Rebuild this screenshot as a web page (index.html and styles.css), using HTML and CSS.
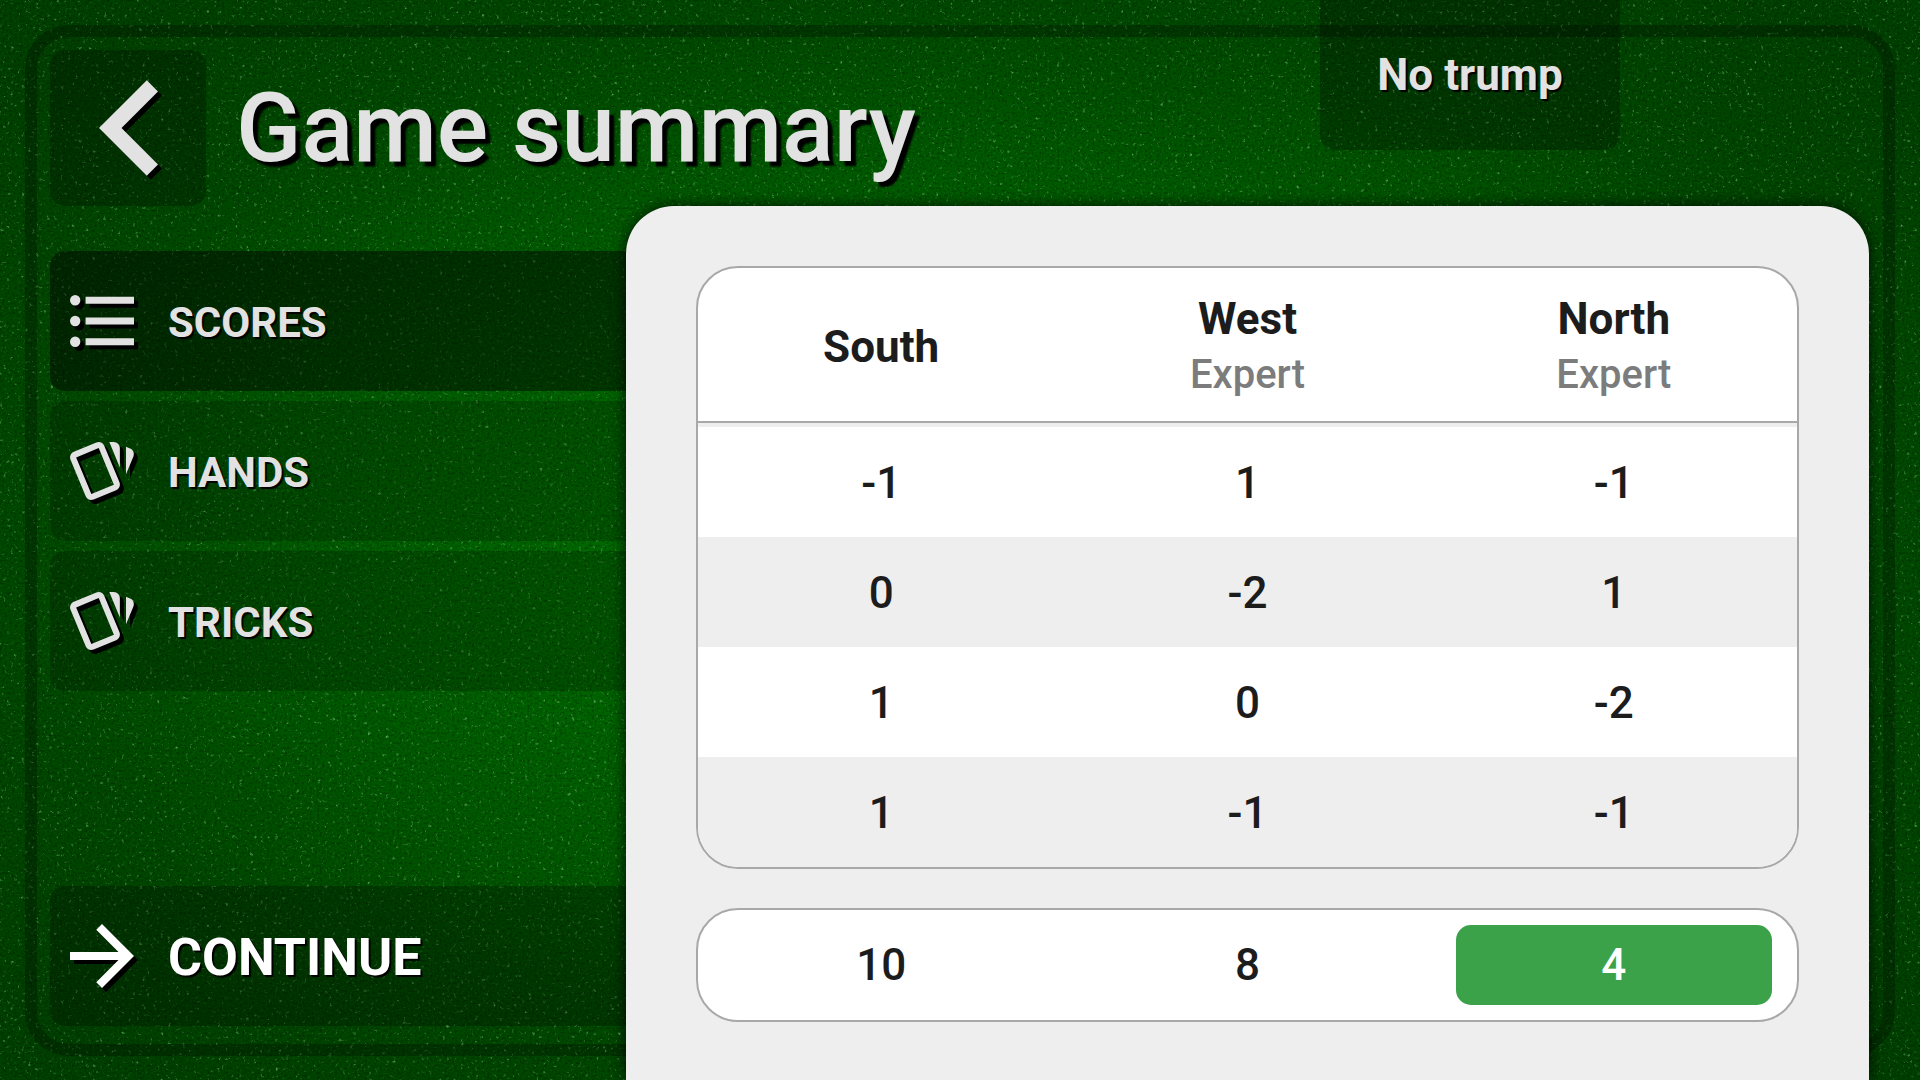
FILE: index.html
```html
<!DOCTYPE html>
<html lang="en">
<head>
<meta charset="utf-8">
<meta name="viewport" content="width=device-width, initial-scale=1">
<title>Game summary</title>
<link rel="stylesheet" href="styles.css">
</head>
<body>
<svg class="felt" aria-hidden="true">
  <filter id="specks" x="0" y="0" width="100%" height="100%" color-interpolation-filters="sRGB">
    <feTurbulence type="fractalNoise" baseFrequency="0.28" numOctaves="3" seed="7"/>
    <feColorMatrix values="0 0 0 0 0.5  0 0 0 0 0.8  0 0 0 0 0.5  2.4 0 0 0 -1.56"/>
  </filter>
  <filter id="grain" x="0" y="0" width="100%" height="100%" color-interpolation-filters="sRGB">
    <feTurbulence type="fractalNoise" baseFrequency="0.4" numOctaves="2" seed="3"/>
    <feColorMatrix values="0 0 0 0 0  0 0 0 0 0  0 0 0 0 0  0 0.8 0 0 -0.36"/>
  </filter>
  <rect width="100%" height="100%" filter="url(#grain)"/>
  <rect width="100%" height="100%" filter="url(#specks)"/>
</svg>
<div class="frame"></div>

<div class="page">
  <header class="header">
    <button class="back" type="button" aria-label="Back">
      <svg class="icon icon-back" viewBox="8 6 7.41 12"><path d="M15.41,16.58L10.83,12L15.41,7.41L14,6L8,12L14,18L15.41,16.58Z"/></svg>
    </button>
    <h1 class="title">Game summary</h1>
    <div class="trump">No trump</div>
  </header>

  <main class="main">
    <nav class="menu" aria-label="Summary sections">
      <button class="menu-item is-active" type="button">
        <svg class="icon icon-list" viewBox="2.5 4.5 18.5 15"><path d="M7,5H21V7H7V5M7,13V11H21V13H7M4,4.5A1.5,1.5 0 0,1 5.5,6A1.5,1.5 0 0,1 4,7.5A1.5,1.5 0 0,1 2.5,6A1.5,1.5 0 0,1 4,4.5M4,10.5A1.5,1.5 0 0,1 5.5,12A1.5,1.5 0 0,1 4,13.5A1.5,1.5 0 0,1 2.5,12A1.5,1.5 0 0,1 4,10.5M7,19V17H21V19H7M4,16.5A1.5,1.5 0 0,1 5.5,18A1.5,1.5 0 0,1 4,19.5A1.5,1.5 0 0,1 2.5,18A1.5,1.5 0 0,1 4,16.5Z"/></svg>
        <span>SCORES</span>
      </button>
      <button class="menu-item" type="button">
        <svg class="icon icon-cards" viewBox="1.82 2.25 20.9 19"><path d="M11.19,2.25C10.93,2.25 10.67,2.31 10.42,2.4L3.06,5.45C2.04,5.87 1.55,7.04 1.97,8.05L6.93,20C7.24,20.77 7.97,21.23 8.74,21.25C9,21.25 9.27,21.22 9.53,21.1L16.9,18.05C17.65,17.74 18.11,17 18.13,16.25C18.14,16 18.09,15.71 18,15.45L13,3.5C12.71,2.73 11.97,2.26 11.19,2.25M14.67,2.25L18.12,10.6V4.25A2,2 0 0,0 16.12,2.25M20.13,3.79V12.82L22.56,6.96C22.97,5.94 22.5,4.78 21.47,4.36M11.19,4.22L16.17,16.24L8.78,19.3L3.8,7.29"/></svg>
        <span>HANDS</span>
      </button>
      <button class="menu-item" type="button">
        <svg class="icon icon-cards" viewBox="1.82 2.25 20.9 19"><path d="M11.19,2.25C10.93,2.25 10.67,2.31 10.42,2.4L3.06,5.45C2.04,5.87 1.55,7.04 1.97,8.05L6.93,20C7.24,20.77 7.97,21.23 8.74,21.25C9,21.25 9.27,21.22 9.53,21.1L16.9,18.05C17.65,17.74 18.11,17 18.13,16.25C18.14,16 18.09,15.71 18,15.45L13,3.5C12.71,2.73 11.97,2.26 11.19,2.25M14.67,2.25L18.12,10.6V4.25A2,2 0 0,0 16.12,2.25M20.13,3.79V12.82L22.56,6.96C22.97,5.94 22.5,4.78 21.47,4.36M11.19,4.22L16.17,16.24L8.78,19.3L3.8,7.29"/></svg>
        <span>TRICKS</span>
      </button>
      <button class="menu-item menu-continue" type="button">
        <svg class="icon icon-arrow" viewBox="4 4.08 15.84 15.84"><path d="M4,11V13H16L10.5,18.5L11.92,19.92L19.84,12L11.92,4.08L10.5,5.5L16,11H4Z"/></svg>
        <span>CONTINUE</span>
      </button>
    </nav>

    <section class="panel">
      <table class="scores">
        <thead>
          <tr>
            <th scope="col">South</th>
            <th scope="col">West<span class="level">Expert</span></th>
            <th scope="col">North<span class="level">Expert</span></th>
          </tr>
        </thead>
        <tbody>
          <tr><td>-1</td><td>1</td><td>-1</td></tr>
          <tr><td>0</td><td>-2</td><td>1</td></tr>
          <tr><td>1</td><td>0</td><td>-2</td></tr>
          <tr><td>1</td><td>-1</td><td>-1</td></tr>
        </tbody>
      </table>
      <table class="scores totals" aria-label="Totals">
        <tbody>
          <tr><td>10</td><td>8</td><td><span class="winner">4</span></td></tr>
        </tbody>
      </table>
    </section>
  </main>
</div>
</body>
</html>
```
FILE: styles.css
```css
* {
  box-sizing: border-box;
}

body {
  margin: 0;
  min-height: 100vh;
  position: relative;
  overflow: hidden;
  font-family: Roboto, "Liberation Sans", sans-serif;
  font-weight: 500;
  color: #e2e2e2;
  background: radial-gradient(closest-side, #007400 0%, #006600 42%, #005800 72%, #004800 100%, #004000 130%);
}

button {
  border: 0;
  padding: 0;
  font: inherit;
  color: inherit;
  cursor: pointer;
}

/* Felt table and its inlaid frame */
.felt {
  position: absolute;
  inset: 0;
  width: 100%;
  height: 100%;
}

.frame {
  position: absolute;
  inset: 25px 25px 24px;
  border: 12px solid rgba(0, 0, 0, 0.25);
  border-radius: 44px;
}

.page {
  position: relative;
  min-height: 100vh;
  display: flex;
  flex-direction: column;
}

.icon {
  display: block;
  flex: none;
  fill: currentColor;
  overflow: visible;
  filter: drop-shadow(4px 4px 0 #000);
}

/* Header */
.header {
  display: flex;
  align-items: flex-start;
  padding: 0 50px;
}

.back {
  width: 156px;
  height: 156px;
  margin-top: 50px;
  display: flex;
  align-items: center;
  justify-content: center;
  border-radius: 15px;
  background: rgba(0, 0, 0, 0.25);
}

.icon-back {
  width: 59px;
  height: 96px;
}

.title {
  margin: 50px 0 0 30px;
  font-size: 96px;
  line-height: 156px;
  font-weight: 500;
  text-shadow: 5px 5px 2px #000;
}

.trump {
  width: 300px;
  height: 150px;
  margin-left: auto;
  margin-right: 250px;
  border-radius: 0 0 15px 15px;
  background: rgba(0, 0, 0, 0.25);
  font-size: 44px;
  font-weight: 700;
  line-height: 150px;
  text-align: center;
  text-shadow: 2px 2px 1px #000;
}

/* Side menu and score panel */
.main {
  flex: 1;
  display: grid;
  grid-template-columns: 30vw minmax(0, 1fr);
  padding: 0 51px 0 50px;
}

.menu {
  display: flex;
  flex-direction: column;
  gap: 10px;
  padding: 45px 0 54px;
}

.menu-item {
  height: 140px;
  display: flex;
  align-items: center;
  gap: 34px;
  padding-left: 20px;
  border-radius: 15px 0 0 15px;
  background: rgba(0, 0, 0, 0.2);
  font-size: 42px;
  font-weight: 700;
  text-shadow: 2px 2px 1px #000;
}

.menu-item span {
  padding-top: 2px;
}

.menu-item.is-active {
  background: rgba(0, 0, 0, 0.45);
}

.menu-continue {
  margin-top: auto;
  background: rgba(0, 0, 0, 0.25);
  color: #fff;
  font-size: 52px;
}

.icon-list {
  width: 64px;
  height: 52px;
}

.icon-cards {
  width: 64px;
  height: 58px;
}

.icon-arrow {
  width: 64px;
  height: 64px;
}

.panel {
  display: flex;
  flex-direction: column;
  gap: 39px;
  padding: 60px 70px 0;
  border-radius: 48px 48px 0 0;
  background: #eee;
  color: #1c1c1c;
  box-shadow: 0 0 15px rgba(0, 0, 0, 0.8);
}

.scores {
  width: 100%;
  table-layout: fixed;
  border: 2px solid #a8a8a8;
  border-collapse: separate;
  border-spacing: 0;
  border-radius: 42px;
  overflow: hidden;
  background: #fff;
  font-size: 44px;
  line-height: 56px;
  text-align: center;
}

.scores th {
  height: 155px;
  padding: 4px 0 0;
  border-bottom: 2px solid #a8a8a8;
  font-weight: 700;
}

.scores td {
  height: 110px;
  padding: 2px 0 0;
}

.scores thead + tbody tr:first-child td {
  height: 114px;
  border-top: 4px solid #eee;
}

.scores tr:nth-child(even) td {
  background: #eee;
}

.totals td {
  padding: 0;
}

.level {
  display: block;
  font-size: 40px;
  font-weight: 500;
  color: #7c7c7c;
}

.winner {
  display: block;
  margin: 0 25px;
  border-radius: 15px;
  background: #3ba249;
  color: #fff;
  line-height: 80px;
}
```
